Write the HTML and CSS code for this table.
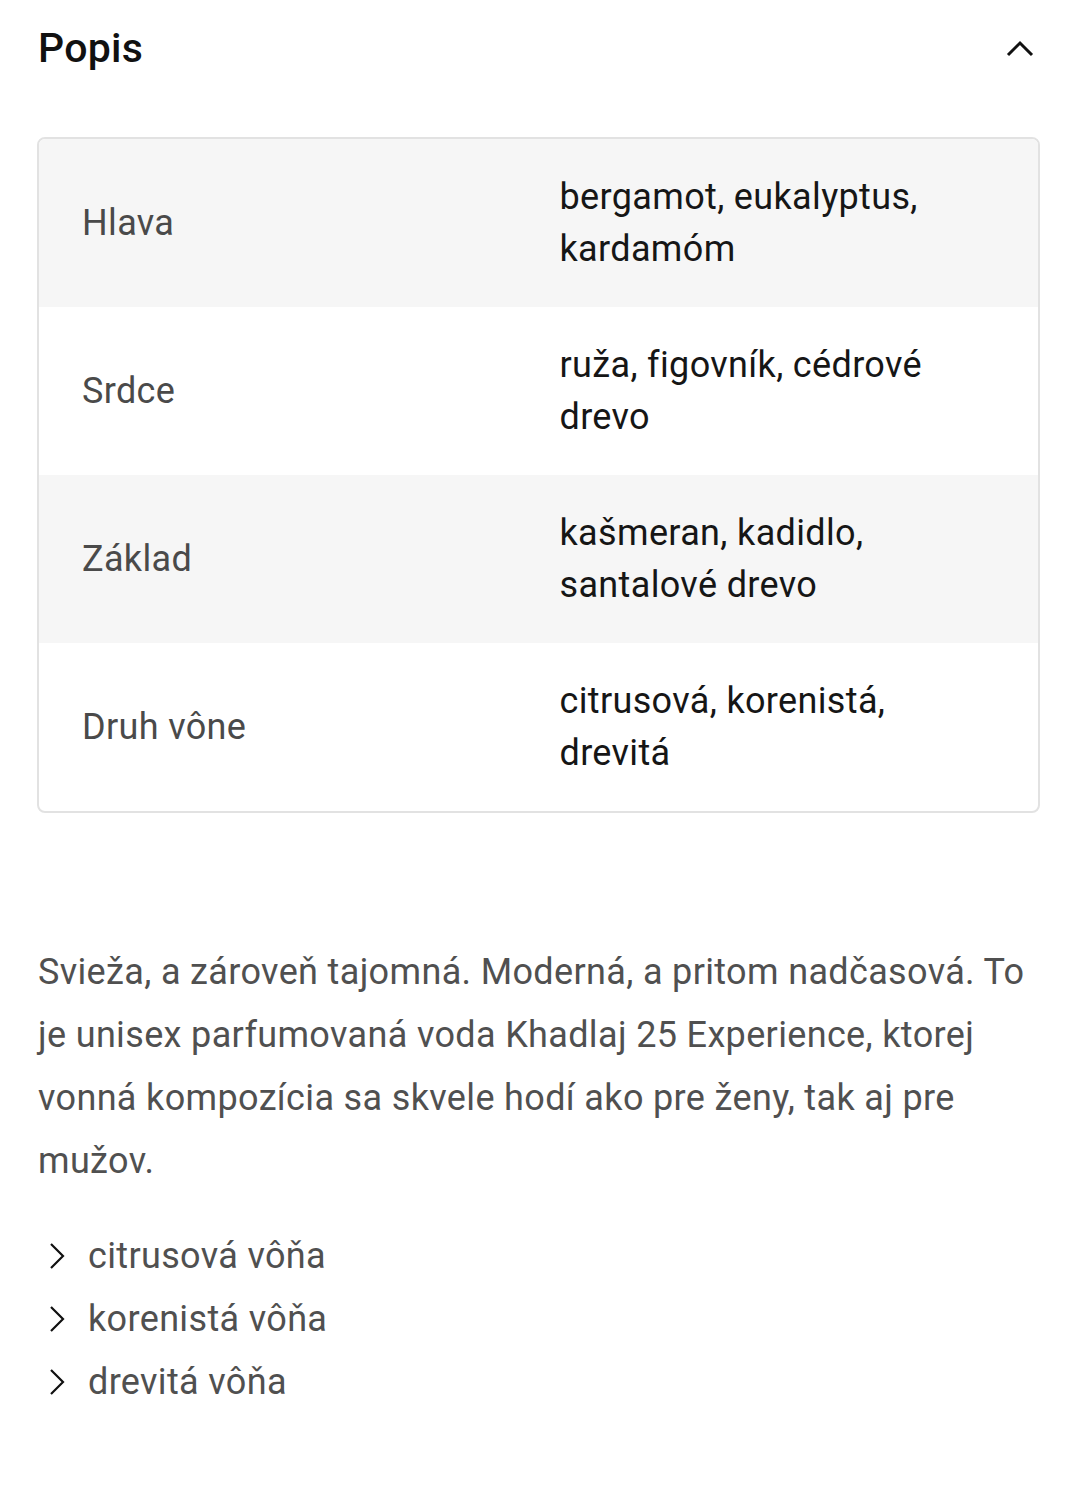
FILE: index.html
```html
<!DOCTYPE html>
<html lang="sk">
<head>
<meta charset="utf-8">
<link rel="stylesheet" href="styles.css">
</head>
<body>
<section class="panel">
  <header class="panel-head">
    <h2 class="panel-title">Popis</h2>
    <svg class="caret" width="30" height="18" viewBox="0 0 30 18"><path d="M3 15 L15 3 L27 15" fill="none" stroke="#111" stroke-width="3"/></svg>
  </header>
  <div class="notes">
    <div class="row alt"><div class="label">Hlava</div><div class="value">bergamot, eukalyptus, kardamóm</div></div>
    <div class="row"><div class="label">Srdce</div><div class="value">ruža, figovník, cédrové drevo</div></div>
    <div class="row alt"><div class="label">Základ</div><div class="value">kašmeran, kadidlo, santalové drevo</div></div>
    <div class="row"><div class="label">Druh vône</div><div class="value">citrusová, korenistá, drevitá</div></div>
  </div>
  <p class="desc">Svieža, a zároveň tajomná. Moderná, a pritom nadčasová. To je unisex parfumovaná voda Khadlaj 25 Experience, ktorej vonná kompozícia sa skvele hodí ako pre ženy, tak aj pre mužov.</p>
  <ul class="tags">
    <li><svg class="chev" width="18" height="28" viewBox="0 0 18 28"><path d="M3 2 L15 14 L3 26" fill="none" stroke="#111" stroke-width="2.2"/></svg>citrusová vôňa</li>
    <li><svg class="chev" width="18" height="28" viewBox="0 0 18 28"><path d="M3 2 L15 14 L3 26" fill="none" stroke="#111" stroke-width="2.2"/></svg>korenistá vôňa</li>
    <li><svg class="chev" width="18" height="28" viewBox="0 0 18 28"><path d="M3 2 L15 14 L3 26" fill="none" stroke="#111" stroke-width="2.2"/></svg>drevitá vôňa</li>
  </ul>
</section>
</body>
</html>
```

FILE: styles.css
```css
html, body {
  margin: 0;
  padding: 0;
  background: #fff;
}
body {
  font-family: Roboto, "Noto Sans", sans-serif;
  letter-spacing: 0.35px;
}
.panel {
  padding: 0 38px 60px 37px;
}
.panel-head {
  display: flex;
  align-items: center;
  justify-content: space-between;
  height: 96px;
  padding-left: 1px;
}
.panel-title {
  margin: 0;
  font-family: Roboto, sans-serif;
  font-weight: 500;
  font-size: 41px;
  color: #111;
  letter-spacing: 0.3px;
}
.caret {
  margin-right: 5px;
  margin-top: 2px;
}
.notes {
  margin-top: 41px;
  border: 2px solid #e2e2e2;
  border-radius: 8px;
  overflow: hidden;
}
.row {
  display: grid;
  grid-template-columns: 1fr 1fr;
  align-items: center;
  min-height: 168px;
  box-sizing: border-box;
  padding: 32px 0;
}
.row.alt {
  background: #f6f6f6;
}
.label {
  padding-left: 43px;
  font-size: 36px;
  color: #4a4a4a;
}
.value {
  padding: 0 50px 0 21px;
  font-size: 36px;
  line-height: 52px;
  color: #161616;
}
.desc {
  margin: 128px 0 0 1px;
  font-size: 36px;
  line-height: 63px;
  color: #505050;
}
.tags {
  list-style: none;
  margin: 31px 0 0 1px;
  padding: 0;
}
.tags li {
  display: flex;
  align-items: center;
  height: 63px;
  font-size: 36px;
  color: #505050;
}
.chev {
  margin-left: 10px;
  margin-right: 22px;
  flex-shrink: 0;
}
```
